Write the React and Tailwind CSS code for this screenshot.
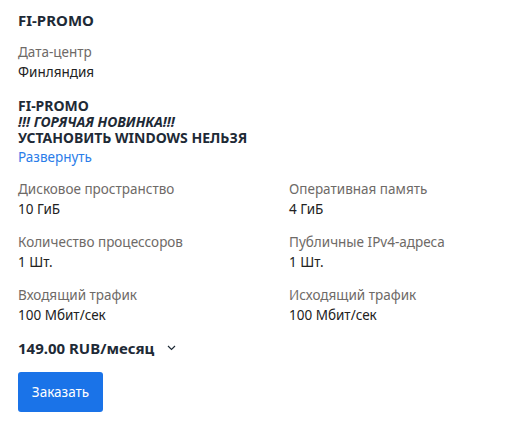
import React from 'react';

const specs = [
    { label: 'Дисковое пространство', value: '10 ГиБ' },
    { label: 'Оперативная память', value: '4 ГиБ' },
    { label: 'Количество процессоров', value: '1 Шт.' },
    { label: 'Публичные IPv4-адреса', value: '1 Шт.' },
    { label: 'Входящий трафик', value: '100 Мбит/сек' },
    { label: 'Исходящий трафик', value: '100 Мбит/сек' },
];

const App = () => {
    return (
        <div className="min-h-screen bg-white px-[18px] pt-[10px] font-['Noto_Sans',sans-serif] text-[13.5px] leading-[20px] text-[#222]">
            <h1 className="text-[15px] font-bold leading-[20px] text-[#1e2a36]">FI-PROMO</h1>

            <div className="mt-[12px]">
                <div className="text-[#6e6a67]">Дата-центр</div>
                <div>Финляндия</div>
            </div>

            <div className="mt-[16px] text-[14px] font-bold leading-[16px] text-[#1e2a36]">
                <div>FI-PROMO</div>
                <div className="italic">!!! ГОРЯЧАЯ НОВИНКА!!!</div>
                <div>УСТАНОВИТЬ WINDOWS НЕЛЬЗЯ</div>
            </div>
            <a href="#" className="mt-[1px] block text-[#2b7de9]">Развернуть</a>

            <div className="mt-[12px] grid grid-cols-[271px_1fr] gap-y-[12px]">
                {specs.map((s) => (
                    <div key={s.label}>
                        <div className="text-[#6e6a67]">{s.label}</div>
                        <div className="leading-[21px]">{s.value}</div>
                    </div>
                ))}
            </div>

            <div className="mt-[12px] flex items-center gap-[13px]">
                <span className="text-[15px] font-bold leading-[20px] text-[#1e2a36]">149.00 RUB/месяц</span>
                <svg width="9" height="6" viewBox="0 0 9 6" fill="none" stroke="#1e2a36" strokeWidth="1.2">
                    <path d="M1 1l3.5 3.5L8 1" />
                </svg>
            </div>

            <button className="mt-[14px] h-[40px] w-[85px] rounded-[3px] bg-[#1a73e8] text-[13.5px] text-white">
                Заказать
            </button>
        </div>
    );
};

export default App;
